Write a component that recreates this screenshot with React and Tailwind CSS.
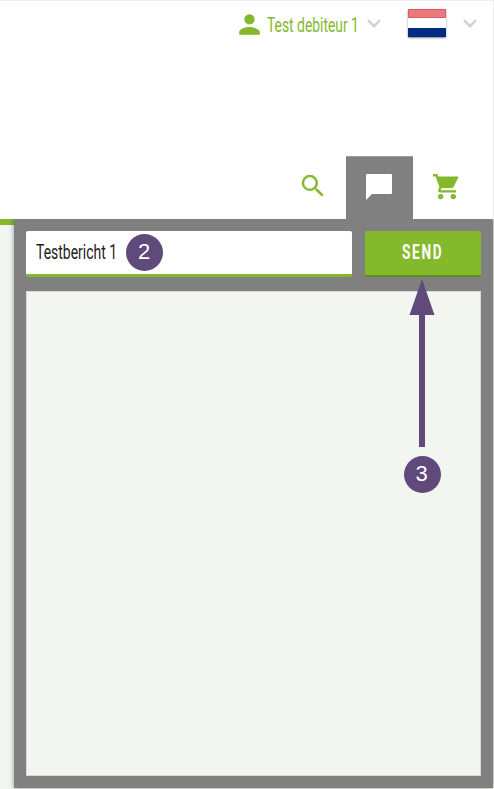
import React from "react";
import { MdPerson, MdSearch } from "react-icons/md";

function Step({ children }) {
  return (
    <span className="flex h-[37px] w-[37px] shrink-0 items-center justify-center rounded-full bg-[#604a7b] pr-px pb-px font-['Liberation_Sans',sans-serif] text-[22px] leading-none text-white">
      {children}
    </span>
  );
}

function Chevron() {
  return (
    <svg width="14" height="9" viewBox="0 0 14 9" fill="none" stroke="#d0d3d6" strokeWidth="2.6" className="shrink-0">
      <path d="M1 1.2 7 7.2 13 1.2" />
    </svg>
  );
}

function Bubble() {
  return (
    <svg width="26" height="26" viewBox="0 0 26 26" fill="currentColor">
      <path d="M1 0H25Q26 0 26 1V19Q26 20 25 20H6L0 26V1Q0 0 1 0Z" />
    </svg>
  );
}

function Cart() {
  return (
    <svg width="26" height="26" viewBox="0 0 26 26" fill="currentColor">
      <path d="M0 0H4.2L5.4 2.6H25L25.4 3.6 20.4 13.3Q20 14 19 14H8.6L7.7 16.2H23V18.4H6.8Q5 18.4 5 16.4L6.4 13 2.6 2.5H0Z" />
      <circle cx="7.7" cy="22.6" r="2.7" />
      <circle cx="20.3" cy="22.6" r="2.7" />
    </svg>
  );
}

function Header() {
  return (
    <header className="flex h-[219px] flex-col justify-between border-t border-r border-[#eeeeee] bg-white">
      <div className="flex h-[47px] items-center pl-[234px] text-[#84b92b]">
        <MdPerson size={31} className="shrink-0" />
        <span className="ml-[2px] block h-[28px] w-[93px] whitespace-nowrap">
          <span className="block w-max origin-left scale-x-[0.66] text-[21px] leading-[29px]">Test debiteur 1</span>
        </span>
        <span className="mb-[2px] ml-[7px] flex"><Chevron /></span>
        <span className="mb-[3px] ml-[27px] flex h-[28px] w-[38px] shrink-0 flex-col rounded-[1px] shadow-[0_1px_2px_rgba(0,0,0,0.5)]">
          <span className="h-[9px] border border-[#dc5c62] bg-[#ea7a7e]" />
          <span className="h-[10px] bg-white" />
          <span className="h-[9px] bg-[#052a86]" />
        </span>
        <span className="mb-[2px] ml-[17px] flex"><Chevron /></span>
      </div>
      <nav className="flex h-[63px] pl-[280px] text-[#84b92b]">
        <button className="flex w-[66px] items-center justify-center pb-[3px]" aria-label="Search">
          <MdSearch size={30} />
        </button>
        <button className="flex w-[67px] items-start justify-center border-t border-[#a0a0a0] bg-[#808080] pt-[17px] pr-[2px] text-white" aria-label="Messages">
          <Bubble />
        </button>
        <button className="flex w-[67px] items-start justify-center pt-[18px] pr-[2px]" aria-label="Cart">
          <Cart />
        </button>
      </nav>
    </header>
  );
}

export default function App() {
  return (
    <div className="flex h-[789px] w-[494px] flex-col overflow-hidden bg-[#f2f5f0] font-[Roboto,sans-serif]">
      <Header />
      <main className="flex h-[570px]">
        <aside className="w-[14px] border-t-[6px] border-[#84b92b]" />
        <section className="relative flex h-[569px] w-[479px] flex-col bg-[#808080] px-3 pt-3 shadow-[0_0_5px_rgba(0,0,0,0.4)] [clip-path:inset(0_-1px_-1px_-6px)]">
          <div className="flex h-[46px] w-[455px] gap-[13px]">
            <div className="flex w-[326px] items-center rounded-[2px] border-b-[3px] border-[#84b92b] bg-white pl-[10px]">
              <span className="block w-[90px] whitespace-nowrap text-[21px] leading-[29px] text-[#222222]">
                <span className="block w-max origin-left scale-x-[0.665]">Testbericht 1</span>
              </span>
              <Step>2</Step>
            </div>
            <button className="flex w-[116px] items-center justify-center rounded-[2px] border-b-2 border-[#5f8d18] bg-[#84b92b] text-[21px] font-bold tracking-[2.5px] text-white">
              <span className="block scale-x-[0.65]">SEND</span>
            </button>
          </div>
          <div className="mt-[14px] h-[485px] w-[455px] border border-[#d8dad6] bg-[#f2f5f0]" />
          <div className="absolute top-[60px] left-[389px] flex w-[38px] flex-col items-center">
            <svg width="26" height="168" viewBox="0 0 26 168" fill="#604a7b">
              <path d="M13 0 L25.5 36 H16 V168 H10 V36 H.5 Z" />
            </svg>
            <span className="mt-[9px]">
              <Step>3</Step>
            </span>
          </div>
        </section>
      </main>
    </div>
  );
}
